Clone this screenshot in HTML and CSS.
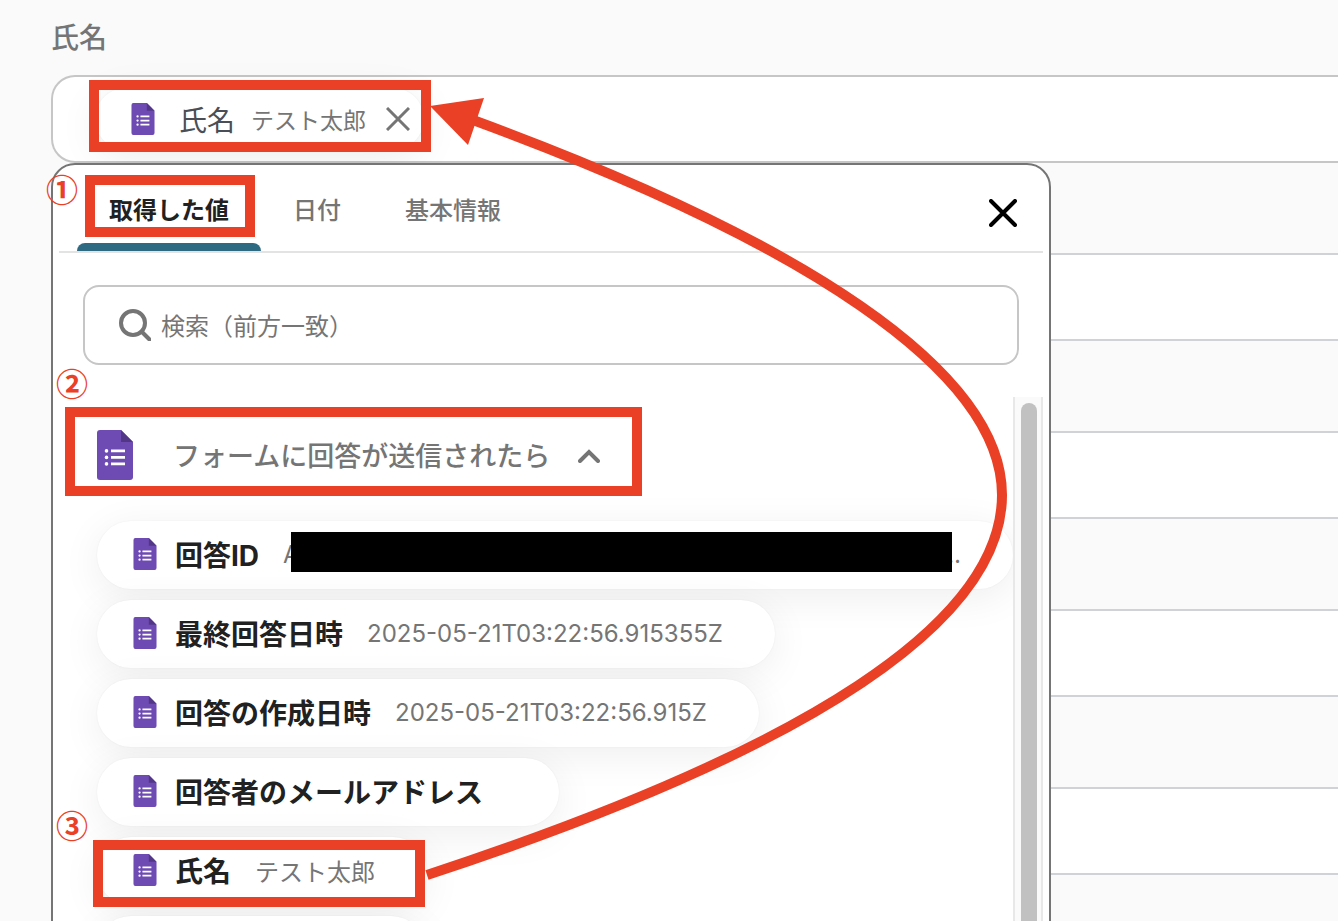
FILE: index.html
```
<!DOCTYPE html>
<html lang="ja">
<head>
    <meta charset="UTF-8">
    <meta name="viewport" content="width=device-width, initial-scale=1.0">
    <link rel="stylesheet" href="styles.css">
    <title>氏名</title>
</head>
<body>

    <!-- Icônes partagées -->
    <svg class="sprite" aria-hidden="true">
        <symbol id="icon-form" viewBox="0 0 36 50">
            <path d="M3 0h21l12 12v35a3 3 0 0 1-3 3H3a3 3 0 0 1-3-3V3a3 3 0 0 1 3-3z" fill="#6e4ab3"/>
            <path d="M24 0l12 12H24z" fill="#523787"/>
            <path d="M14 19.500h14v2.800H14zM14 26h14v2.800H14zM14 32.500h14v2.800H14z" fill="#fff"/>
            <circle cx="9.500" cy="20.900" r="1.800" fill="#fff"/>
            <circle cx="9.500" cy="27.400" r="1.800" fill="#fff"/>
            <circle cx="9.500" cy="33.900" r="1.800" fill="#fff"/>
        </symbol>
    </svg>

    <form class="form">
        <div class="field field-first">
            <span class="field-label" id="name-label">氏名</span>
            <div class="tag-box" role="group" aria-labelledby="name-label">
                <span class="tag">
                    <svg class="icon-small"><use href="#icon-form"/></svg>
                    <span class="tag-name">氏名</span>
                    <span class="tag-value">テスト太郎</span>
                    <button type="button" class="tag-remove" aria-label="削除">
                        <svg viewBox="0 0 24 24"><path d="M1 1l22 22M23 1L1 23" /></svg>
                    </button>
                </span>
            </div>

            <div class="panel">
                <div class="tabs">
                    <button type="button" class="tab active">取得した値</button>
                    <button type="button" class="tab">日付</button>
                    <button type="button" class="tab">基本情報</button>
                    <button type="button" class="close" aria-label="閉じる">
                        <svg viewBox="0 0 28 28"><path d="M2 2l24 24M26 2L2 26" /></svg>
                    </button>
                </div>

                <label class="search">
                    <svg viewBox="0 0 32 32"><circle cx="14" cy="14" r="12" /><path d="M22.500 22.500l8 8" /></svg>
                    <input type="text" placeholder="検索（前方一致）" aria-label="検索">
                </label>

                <div class="results">
                    <div class="list">
                        <button type="button" class="group">
                            <svg class="icon-big"><use href="#icon-form"/></svg>
                            <span class="group-name">フォームに回答が送信されたら</span>
                            <svg class="chevron" viewBox="0 0 22 14"><path d="M2 12l9-9 9 9" /></svg>
                        </button>
                        <button type="button" class="item wide">
                            <svg class="icon-small"><use href="#icon-form"/></svg>
                            <span class="item-name">回答ID</span>
                            <span class="item-value"><span>A</span><span>…</span></span>
                        </button>
                        <button type="button" class="item">
                            <svg class="icon-small"><use href="#icon-form"/></svg>
                            <span class="item-name">最終回答日時</span>
                            <span class="item-value">2025-05-21T03:22:56.915355Z</span>
                        </button>
                        <button type="button" class="item">
                            <svg class="icon-small"><use href="#icon-form"/></svg>
                            <span class="item-name">回答の作成日時</span>
                            <span class="item-value">2025-05-21T03:22:56.915Z</span>
                        </button>
                        <button type="button" class="item">
                            <svg class="icon-small"><use href="#icon-form"/></svg>
                            <span class="item-name">回答者のメールアドレス</span>
                            <span class="item-value"></span>
                        </button>
                        <button type="button" class="item">
                            <svg class="icon-small"><use href="#icon-form"/></svg>
                            <span class="item-name">氏名</span>
                            <span class="item-value">テスト太郎</span>
                        </button>
                        <button type="button" class="item" aria-label="回答">
                            <svg class="icon-small"><use href="#icon-form"/></svg>
                        </button>
                    </div>
                    <div class="scrollbar"><div class="thumb"></div></div>
                </div>
            </div>
        </div>

        <div class="field"><input type="text" aria-label="項目2"></div>
        <div class="field"><input type="text" aria-label="項目3"></div>
        <div class="field"><input type="text" aria-label="項目4"></div>
        <div class="field"><input type="text" aria-label="項目5"></div>
    </form>

    <!-- Annotations posées par-dessus le formulaire -->
    <div class="mask"></div>
    <div class="frame frame-tag"></div>
    <div class="frame frame-tab"></div>
    <div class="frame frame-group"></div>
    <div class="frame frame-item"></div>
    <span class="step step-1">①</span>
    <span class="step step-2">②</span>
    <span class="step step-3">③</span>
    <svg class="arrow" viewBox="0 0 1338 921" aria-hidden="true">
        <path d="M427 875C810 749 1002 622 1002 495C1002 370 800 240 473 120" fill="none" stroke="#ea4025" stroke-width="10"/>
        <path d="M430 106L484 98L468 145z" fill="#ea4025"/>
    </svg>

</body>
</html>
```
FILE: styles.css
```
* {
    box-sizing: border-box;
}

html {
    overflow: hidden;
}

body {
    margin: 0;
    height: 100vh;
    overflow: hidden;
    position: relative;
    background-color: #fafafa;
    color: #212121;
    font-family: Inter, "Noto Sans CJK JP", sans-serif;
}

button {
    border: 0;
    padding: 0;
    background: none;
    color: inherit;
    font-family: inherit;
}

svg {
    display: block;
    flex: none;
}

.sprite {
    display: none;
}

.icon-small {
    width: 24px;
    height: 32px;
}

.icon-big {
    width: 36px;
    height: 50px;
}

/* Formulaire */
.form {
    padding-left: 51px;
}

.field {
    position: relative;
    padding-top: 90px;
}

.field-first {
    padding-top: 0;
}

.field-label {
    display: block;
    height: 75px;
    padding-top: 2px;
    line-height: 73px;
    font-size: 28px;
    font-weight: 500;
    color: #757575;
}

.field > input,
.tag-box {
    display: flex;
    align-items: center;
    width: 100%;
    height: 88px;
    border: 2px solid #cfd3d7;
    border-right: 0;
    border-radius: 24px 0 0 24px;
    background-color: #fff;
}

.tag-box {
    border-color: #c6c6c6;
    padding-left: 42px;
}

.tag {
    display: flex;
    align-items: center;
    height: 62px;
    padding: 0 14px 0 36px;
    border-radius: 32px;
    background-color: #fff;
    box-shadow: 0 8px 40px rgba(0, 0, 0, 0.08), 0 0 2px rgba(0, 0, 0, 0.06);
}

.tag-name {
    margin-left: 24px;
    font-size: 28px;
    color: #4a4f57;
}

.tag-value {
    margin-left: 16px;
    font-size: 23px;
    color: #757575;
}

.tag-remove {
    margin-left: 20px;
}

.tag-remove svg {
    width: 24px;
    height: 24px;
}

.tag-remove path {
    stroke: #757575;
    stroke-width: 3;
}

/* Panneau de sélection */
.panel {
    position: absolute;
    z-index: 1;
    top: 100%;
    left: 0;
    width: 78%;
    max-width: 1000px;
    padding: 0 6px;
    border: 2px solid #757575;
    border-radius: 24px;
    background-color: #fff;
}

.tabs {
    display: flex;
    height: 88px;
    padding: 0 26px 0 18px;
    border-bottom: 2px solid #e3e3e3;
}

.tab {
    padding: 8px 32px 0;
    border-bottom: 8px solid transparent;
    font-size: 24px;
    font-weight: 500;
    color: #757575;
}

.tab.active {
    position: relative;
    font-weight: bold;
    color: #212121;
}

.tab.active::after {
    content: "";
    position: absolute;
    left: 0;
    right: 0;
    bottom: -8px;
    height: 8px;
    border-radius: 8px 8px 0 0;
    background-color: #2f6a83;
}

.close {
    margin-left: auto;
    padding-top: 10px;
}

.close svg {
    width: 28px;
    height: 28px;
}

.close path {
    stroke: #000;
    stroke-width: 4;
    stroke-linecap: round;
}

.search {
    display: flex;
    align-items: center;
    gap: 10px;
    height: 80px;
    margin: 32px 24px;
    padding: 0 34px;
    border: 2px solid #c6c6c6;
    border-radius: 16px;
}

.search svg {
    width: 32px;
    height: 32px;
    fill: none;
    stroke: #757575;
    stroke-width: 4;
    stroke-linecap: round;
}

.search input {
    flex: 1;
    border: 0;
    padding: 2px 0 0;
    outline: none;
    background: none;
    font-family: inherit;
    font-size: 24px;
}

.search input::placeholder {
    color: #757575;
}

.results {
    display: flex;
}

.list {
    flex: 1;
    display: flex;
    flex-direction: column;
    align-items: flex-start;
    gap: 11px;
    padding: 30px 0 0 38px;
    overflow: hidden;
}

.group {
    display: flex;
    align-items: center;
    height: 56px;
    margin-bottom: 27px;
    color: #757575;
}

.group-name {
    margin-left: 40px;
    padding-bottom: 2px;
    font-size: 27px;
    font-weight: 500;
}

.chevron {
    width: 22px;
    height: 14px;
    margin: 2px 0 0 28px;
    fill: none;
    stroke: #757575;
    stroke-width: 4;
    stroke-linecap: round;
}

.item {
    display: flex;
    align-items: center;
    height: 68px;
    min-width: 328px;
    padding: 0 52px 2px 36px;
    border-radius: 34px;
    background-color: #fff;
    box-shadow: 0 8px 40px rgba(0, 0, 0, 0.07), 0 0 2px rgba(0, 0, 0, 0.06);
}

.item.wide {
    width: 100%;
}

.item-name {
    margin-left: 18px;
    font-size: 28px;
    font-weight: bold;
}

.item-value {
    margin-left: 24px;
    font-size: 24px;
    color: #757575;
}

.item.wide .item-value {
    flex: 1;
    display: flex;
    justify-content: space-between;
}

.scrollbar {
    width: 30px;
    padding: 6px 4px 0 6px;
    border: solid #e8e8e8;
    border-width: 0 2px;
    background-color: #fafafa;
}

.thumb {
    width: 16px;
    height: 100%;
    border-radius: 8px;
    background-color: #c1c1c1;
}

/* Annotations */
.mask,
.frame,
.step,
.arrow {
    position: absolute;
    z-index: 2;
    pointer-events: none;
}

.mask {
    left: 291px;
    top: 532px;
    width: 661px;
    height: 40px;
    background-color: #000;
}

.frame {
    border: 10px solid #ea4025;
}

.frame-tag {
    left: 89px;
    top: 80px;
    width: 342px;
    height: 72px;
}

.frame-tab {
    left: 85px;
    top: 175px;
    width: 170px;
    height: 62px;
}

.frame-group {
    left: 65px;
    top: 407px;
    width: 577px;
    height: 89px;
}

.frame-item {
    left: 93px;
    top: 840px;
    width: 332px;
    height: 67px;
}

.step {
    font-family: "Noto Sans CJK JP", sans-serif;
    font-size: 32px;
    line-height: 32px;
    font-weight: bold;
    color: #ea4025;
}

.step-1 {
    left: 46px;
    top: 172px;
}

.step-2 {
    left: 56px;
    top: 366px;
}

.step-3 {
    left: 56px;
    top: 808px;
}

.arrow {
    left: 0;
    top: 0;
    width: 1338px;
    height: 921px;
}
```
